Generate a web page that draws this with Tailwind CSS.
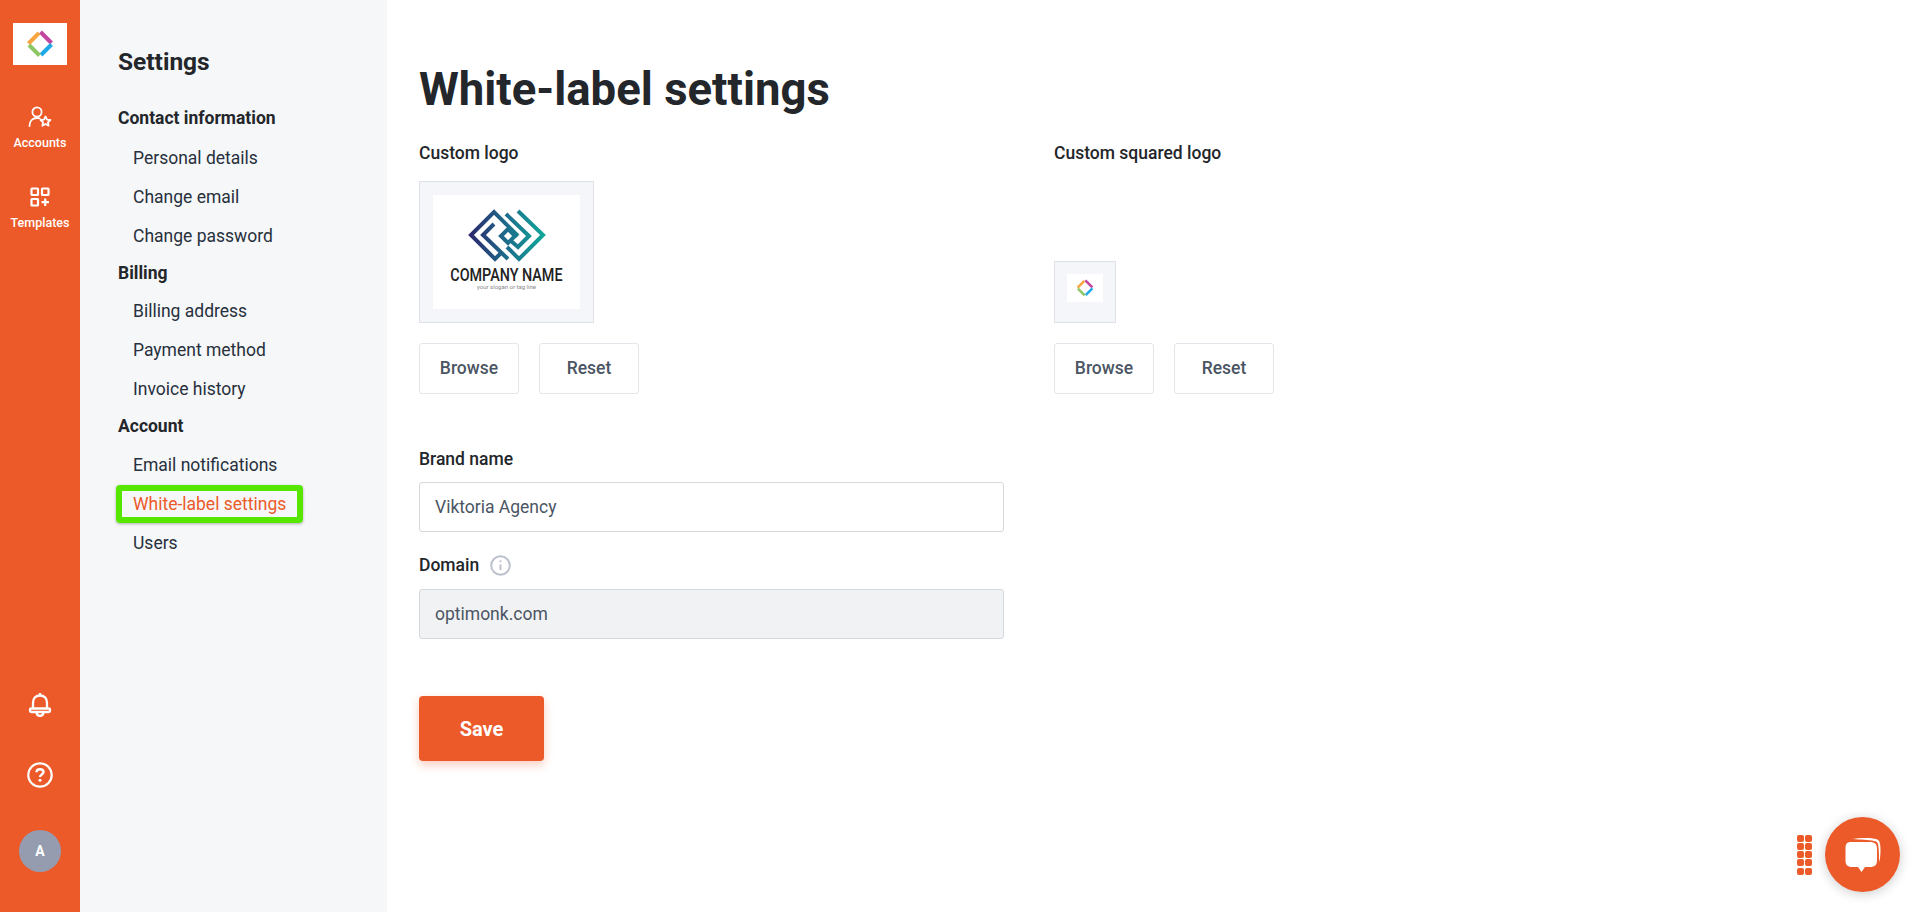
<!DOCTYPE html>
<html lang="en">
<head>
  <meta charset="UTF-8" />
  <title>White-label settings</title>
  <script src="https://cdn.jsdelivr.net/npm/@tailwindcss/browser@4"></script>
</head>
<body class="bg-white font-['Roboto',sans-serif] text-[#23262a] overflow-hidden">
  <div class="flex h-[912px]">
    <!-- main nav -->
    <aside class="w-[80px] bg-[#ec5a29] flex flex-col items-center text-white shrink-0">
      <div class="mt-[23px] w-[54px] h-[42px] bg-white flex items-center justify-center">
        <svg width="28" height="28" viewBox="0 0 28 28" fill="none" stroke-width="4">
          <path d="M14.5 2 L25.5 13" stroke="#c2459f"/>
          <path d="M25.5 14.5 L15 25" stroke="#1fa9e6"/>
          <path d="M13.5 25.5 L3 15" stroke="#8cc665"/>
          <path d="M2.5 13.5 L13 3" stroke="#f7a540"/>
        </svg>
      </div>
      <div class="mt-[40px] flex flex-col items-center">
        <svg width="24" height="24" viewBox="0 0 24 24" fill="none" stroke="white" stroke-width="1.8" stroke-linecap="round" stroke-linejoin="round">
          <circle cx="9" cy="7" r="4.6"/>
          <path d="M1.5 21 C1.5 16 4.5 13 9 13 C10 13 11 13.2 11.8 13.5"/>
          <path d="M17.5 11.5 L19 14.6 L22.4 15 L19.9 17.3 L20.6 20.7 L17.5 19 L14.4 20.7 L15.1 17.3 L12.6 15 L16 14.6 Z"/>
        </svg>
        <span class="mt-[6px] text-[12.5px] font-medium leading-[16px]">Accounts</span>
      </div>
      <div class="mt-[36px] flex flex-col items-center">
        <svg width="20" height="20" viewBox="0 0 20 20" fill="none" stroke="white" stroke-width="2.2">
          <rect x="1.5" y="1.5" width="6.5" height="6.5" rx="0.5"/>
          <rect x="12" y="1.5" width="6.5" height="6.5" rx="0.5"/>
          <rect x="1.5" y="12" width="6.5" height="6.5" rx="0.5"/>
          <path d="M15.2 11.5 V19 M11.5 15.2 H19"/>
        </svg>
        <span class="mt-[8px] text-[12.5px] font-medium leading-[16px]">Templates</span>
      </div>
      <div class="mt-auto mb-[40px] flex flex-col items-center">
        <svg width="24" height="26" viewBox="0 0 24 26" fill="none" stroke="white" stroke-width="2.3" stroke-linejoin="round">
          <path d="M12 1 V3"/>
          <path d="M5 17 V11 C5 6 8 3.5 12 3.5 C16 3.5 19 6 19 11 V17"/>
          <rect x="2" y="16.5" width="20" height="3.5" rx="1.2"/>
          <path d="M8.5 20.5 C9 25 15 25 15.5 20.5"/>
        </svg>
        <svg class="mt-[44px]" width="26" height="26" viewBox="0 0 26 26" fill="none" stroke="white" stroke-width="2.2">
          <circle cx="13" cy="13" r="11.7"/>
          <path d="M9.5 10.3 C9.5 8.3 11 7.2 13 7.2 C15 7.2 16.5 8.4 16.5 10.1 C16.5 12.4 13 12.6 13 15" stroke-width="2.4"/>
          <circle cx="13" cy="18.3" r="1.5" fill="white" stroke="none"/>
        </svg>
        <div class="mt-[42px] w-[42px] h-[42px] rounded-full bg-[#959cb0] flex items-center justify-center text-[14px] font-bold">A</div>
      </div>
    </aside>

    <!-- settings menu -->
    <nav class="w-[307px] bg-[#f6f7f9] pl-[38px] shrink-0 text-[17.5px] leading-[24px] text-[#27303c]">
      <h2 class="mt-[47px] text-[24.5px] leading-[30px] font-bold text-[#23262a]">Settings</h2>
      <div class="mt-[29px] text-[17.5px] font-bold text-[#23262a]">Contact information</div>
      <ul class="pl-[15px] mt-[16px] flex flex-col gap-[15px]">
        <li>Personal details</li>
        <li>Change email</li>
        <li>Change password</li>
      </ul>
      <div class="mt-[13px] text-[17.5px] font-bold text-[#23262a]">Billing</div>
      <ul class="pl-[15px] mt-[14px] flex flex-col gap-[15px]">
        <li>Billing address</li>
        <li>Payment method</li>
        <li>Invoice history</li>
      </ul>
      <div class="mt-[13px] text-[17.5px] font-bold text-[#23262a]">Account</div>
      <ul class="pl-[15px] mt-[15px] flex flex-col gap-[15px]">
        <li>Email notifications</li>
        <li class="relative text-[#ec5a29]">
          White-label settings
          <span class="absolute left-[-17px] right-[84px] top-[-7px] bottom-[-7px] border-[6px] border-[#56e600] rounded-[4px] shadow-[0_1px_3px_rgba(0,0,0,0.3)]"></span>
        </li>
        <li>Users</li>
      </ul>
    </nav>

    <!-- content -->
    <main class="flex-1 pl-[32px] pt-[60px]">
      <h1 class="text-[45.5px] leading-[60px] font-bold">White-label settings</h1>
      <div class="mt-[21px] flex gap-[60px]">
        <div class="w-[575px]">
          <label class="block text-[17.5px] leading-[24px] font-medium">Custom logo</label>
          <div class="mt-[16px] w-[175px] h-[142px] border border-[#dfe1e8] bg-[#f5f6fa] p-[13px]">
            <div class="h-full bg-white flex flex-col items-center pt-[10px]">
              <svg class="shrink-0 ml-[4px]" width="95" height="65" viewBox="0 0 95 65" fill="none" stroke="url(#lg)" stroke-width="4">
                <defs>
                  <linearGradient id="lg" gradientUnits="userSpaceOnUse" x1="10" y1="30" x2="84" y2="30">
                    <stop offset="0" stop-color="#2b2a6e"/>
                    <stop offset="0.5" stop-color="#1c6f8c"/>
                    <stop offset="1" stop-color="#10a89a"/>
                  </linearGradient>
                </defs>
                <path d="M57 31 L33 7 L10 30 L34 54 L40 48"/>
                <path d="M33 19 L22 30 L47 54"/>
                <path d="M57 6 L82 30 L58 54 L46 42"/>
                <path d="M45 9 L68 31 L57 42 L50 36"/>
                <path d="M47 24 L54 31 L47 38 L40 31 Z"/>
              </svg>
              <div class="mt-[-3px] whitespace-nowrap scale-x-[0.82] text-[17.5px] font-medium leading-[17px] text-[#222]">COMPANY NAME</div>
              <div class="mt-[-1px] whitespace-nowrap text-[6px] leading-[8px] text-[#888]">your slogan or tag line</div>
            </div>
          </div>
          <div class="mt-[20px] flex gap-[20px]">
            <button class="w-[100px] h-[51px] border border-[#e3e5ea] rounded-[3px] text-[17.5px] font-medium text-[#4b5563]">Browse</button>
            <button class="w-[100px] h-[51px] border border-[#e3e5ea] rounded-[3px] text-[17.5px] font-medium text-[#4b5563]">Reset</button>
          </div>
        </div>
        <div>
          <label class="block text-[17.5px] leading-[24px] font-medium">Custom squared logo</label>
          <div class="mt-[96px] w-[62px] h-[62px] border border-[#dfe1e8] bg-[#f5f6fa] flex items-start justify-center pt-[12px]">
            <div class="w-[36px] h-[28px] bg-white flex items-center justify-center">
              <svg width="18" height="18" viewBox="0 0 28 28" fill="none" stroke-width="4">
                <path d="M14.5 2 L25.5 13" stroke="#c2459f"/>
                <path d="M25.5 14.5 L15 25" stroke="#1fa9e6"/>
                <path d="M13.5 25.5 L3 15" stroke="#8cc665"/>
                <path d="M2.5 13.5 L13 3" stroke="#f7a540"/>
              </svg>
            </div>
          </div>
          <div class="mt-[20px] flex gap-[20px]">
            <button class="w-[100px] h-[51px] border border-[#e3e5ea] rounded-[3px] text-[17.5px] font-medium text-[#4b5563]">Browse</button>
            <button class="w-[100px] h-[51px] border border-[#e3e5ea] rounded-[3px] text-[17.5px] font-medium text-[#4b5563]">Reset</button>
          </div>
        </div>
      </div>
      <div class="mt-[53px] w-[585px]">
        <label class="block text-[17.5px] leading-[24px] font-medium">Brand name</label>
        <input class="mt-[11px] block w-full h-[50px] px-[15px] border border-[#d5d8dd] rounded-[3px] text-[17.5px] text-[#4b5563]" value="Viktoria Agency" />
        <div class="mt-[21px] flex items-center gap-[11px] h-[24px]">
          <label class="text-[17.5px] leading-[24px] font-medium">Domain</label>
          <svg width="21" height="21" viewBox="0 0 21 21" fill="none" stroke="#bcc1cc" stroke-width="2">
            <circle cx="10.5" cy="10.5" r="9.3"/>
            <path d="M10.5 9.5 V15" stroke-width="2"/>
            <circle cx="10.5" cy="6.3" r="1.1" fill="#bcc1cc" stroke="none"/>
          </svg>
        </div>
        <input disabled class="mt-[12px] block w-full h-[50px] px-[15px] border border-[#d5d8dd] rounded-[3px] bg-[#f1f2f4] text-[17.5px] text-[#4b5563]" value="optimonk.com" />
      </div>
      <button class="mt-[57px] w-[125px] h-[65px] bg-[#ec5a29] rounded-[4px] text-white text-[20px] font-bold shadow-[0_4px_10px_rgba(241,90,41,0.3)]">Save</button>
    </main>
  </div>

  <!-- chat widget -->
  <div class="fixed right-[20px] bottom-[20px] flex items-center gap-[13px]">
    <div class="grid grid-cols-2 gap-x-[1px] gap-y-[1.25px]">
      <span class="w-[7px] h-[7px] rounded-[2px] bg-[#ec5a29]"></span><span class="w-[7px] h-[7px] rounded-[2px] bg-[#ec5a29]"></span>
      <span class="w-[7px] h-[7px] rounded-[2px] bg-[#ec5a29]"></span><span class="w-[7px] h-[7px] rounded-[2px] bg-[#ec5a29]"></span>
      <span class="w-[7px] h-[7px] rounded-[2px] bg-[#ec5a29]"></span><span class="w-[7px] h-[7px] rounded-[2px] bg-[#ec5a29]"></span>
      <span class="w-[7px] h-[7px] rounded-[2px] bg-[#ec5a29]"></span><span class="w-[7px] h-[7px] rounded-[2px] bg-[#ec5a29]"></span>
      <span class="w-[7px] h-[7px] rounded-[2px] bg-[#ec5a29]"></span><span class="w-[7px] h-[7px] rounded-[2px] bg-[#ec5a29]"></span>
    </div>
    <div class="w-[75px] h-[75px] rounded-full bg-[#ec5a29] shadow-[0_2px_12px_rgba(0,0,0,0.2)] flex items-center justify-center">
      <svg width="38" height="38" viewBox="0 0 38 38" fill="white">
        <path d="M7 3 C16 1.5 28 1.5 32 3 C36 4 36.5 8 36.5 14 C36.5 19 36 24 35 26 C35 20 35 12 34 8 C33.5 5.5 31 5 28 4.5 C22 3.8 12 3.5 7 3 Z"/>
        <path d="M7 6 H26 C31 6 33 8 33 13 V24 C33 29 31 31 26 31 H21 L17.5 36 L14 31 H8 C3.5 31 1.5 29 1.5 24 V12 C1.5 8 3 6 7 6 Z"/>
      </svg>
    </div>
  </div>
</body>
</html>
